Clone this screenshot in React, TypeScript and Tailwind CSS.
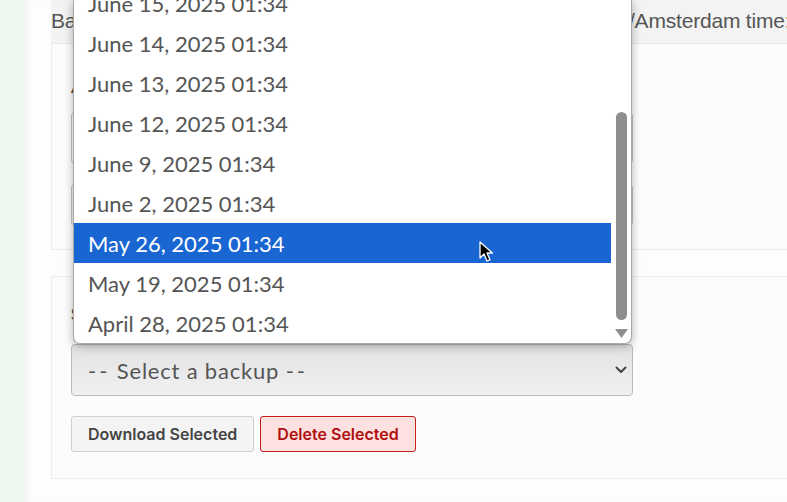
import React from "react";

const backups = [
  "June 15, 2025 01:34",
  "June 14, 2025 01:34",
  "June 13, 2025 01:34",
  "June 12, 2025 01:34",
  "June 9, 2025 01:34",
  "June 2, 2025 01:34",
  "May 26, 2025 01:34",
  "May 19, 2025 01:34",
  "April 28, 2025 01:34",
];

const selected = "May 26, 2025 01:34";

function Chevron() {
  return (
    <svg width="12" height="8" viewBox="0 0 12 8" fill="none">
      <path d="M1.5 1.5 6 6l4.5-4.5" stroke="#444" strokeWidth="2" strokeLinecap="round" strokeLinejoin="round" />
    </svg>
  );
}

function Cursor() {
  return (
    <svg width="14" height="21" viewBox="0 0 14 21">
      <path d="M1 1v16l4-4 3 7 3-1.3-3-6.7h5.5z" fill="#000" stroke="#fff" strokeWidth="1.3" strokeLinejoin="round" />
    </svg>
  );
}

export default function App() {
  return (
    <div className="relative flex h-[502px] w-[787px] overflow-hidden bg-white">
      <div className="w-[25px] shrink-0 bg-[#edf8ee]" />
      <div className="min-w-0 flex-1 bg-[#fdfdfd] pl-[26px] shadow-[inset_6px_0_8px_-6px_rgba(0,0,0,0.08)]">
        <div className="h-[44px] border-b border-[#e8e8e8] bg-[#f3f3f3] pt-[5px]">
          <p className="whitespace-nowrap font-['Liberation_Sans',Arial,sans-serif] text-[21px] tracking-[-0.19px] text-[#555]">
            Backups are created weekly and listed below by date in Europe/Amsterdam time: newest first.
          </p>
        </div>

        <div className="w-[760px] border border-t-0 border-[#ececec] bg-[#fcfcfc] px-[19px] pt-[30px] pb-[23px]">
          <p className="font-['Lato',sans-serif] text-[17px] font-bold text-[#444]">Automatic backups</p>
          <div className="mt-[12px] h-[52px] w-[562px] rounded-[4px] border border-[#c4c4c4] bg-white" />
          <div className="mt-[20px] h-[42px] w-[562px] rounded-[4px] border border-[#c4c4c4] bg-[#f4f4f4]" />
        </div>

        <div className="mt-[26px] w-[760px] border border-[#ececec] bg-[#fcfcfc] px-[19px] pt-[24px] pb-[26px]">
          <p className="font-['Lato',sans-serif] text-[17px] font-bold text-[#444]">Stored backups</p>
          <div className="mt-[18px] flex h-[52px] w-[562px] items-center justify-between rounded-[4px] border border-[#b9b9b9] bg-gradient-to-b from-[#e2e2e2] to-[#f1f1f1] pr-[5px] pl-[16px]">
            <span className="font-['Lato',sans-serif] text-[22px] tracking-[0.8px] text-[#555]">
              <span className="tracking-[3px]">--</span> Select a backup <span className="tracking-[3px]">--</span>
            </span>
            <Chevron />
          </div>
          <div className="mt-[20px] flex gap-[6px]">
            <button className="h-[36px] rounded-[3px] border border-[#cfcfcf] bg-[#f4f4f4] px-[16px] font-['Inter',sans-serif] text-[16px] font-semibold text-[#444]">
              Download Selected
            </button>
            <button className="h-[36px] rounded-[3px] border border-[#c81d1d] bg-[#fde0e0] px-[16px] font-['Inter',sans-serif] text-[16px] font-semibold text-[#b10f0f]">
              Delete Selected
            </button>
          </div>
        </div>
      </div>

      {/* open select list */}
      <div className="absolute top-0 left-[73px] flex h-[344px] w-[559px] overflow-hidden rounded-b-[7px] border border-t-0 border-[#a9a9a9] bg-white shadow-[0_2px_10px_rgba(0,0,0,0.3)]">
        <ul className="-mt-[17px] flex-1 font-['Lato',sans-serif] text-[22px] text-[#555]">
          {backups.map((b) => (
            <li
              key={b}
              className={
                b === selected
                  ? "flex h-[40px] items-center bg-[#1966d2] pl-[14px] text-white"
                  : "flex h-[40px] items-center pl-[14px]"
              }
            >
              {b}
            </li>
          ))}
        </ul>
        <div className="flex w-[20px] shrink-0 flex-col items-center pt-[112px]">
          <div className="h-[208px] w-[11px] rounded-full bg-[#8e8e8e]" />
          <svg className="mt-[9px]" width="13" height="9" viewBox="0 0 13 9">
            <path d="M0 0h13L6.5 9z" fill="#8e8e8e" />
          </svg>
        </div>
      </div>

      <div className="absolute top-[241px] left-[479px]">
        <Cursor />
      </div>
    </div>
  );
}
